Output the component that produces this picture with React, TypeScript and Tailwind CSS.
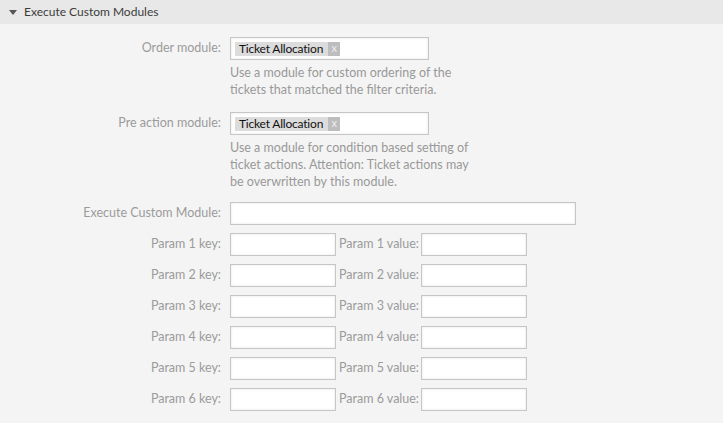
import React from 'react';

const font = { fontFamily: '"Source Sans Pro", Lato, "Noto Sans", sans-serif' };

function Tag({ label }: { label: string }) {
  return (
    <span className="inline-flex h-[14px] items-stretch bg-[#dcdcdc] text-[12px] leading-[14px] text-[#111]">
      <span className="pl-[4px] pr-[5px] tracking-[-0.2px]">{label}</span>
      <span className="flex w-[12px] items-center justify-center bg-[#bdbdbd] pb-[1px] text-[11px] text-[#eee]">x</span>
    </span>
  );
}

function Field({ className = '', children }: { className?: string; children?: React.ReactNode }) {
  return (
    <div
      className={`flex h-[23px] shrink-0 items-center border border-[#c6c6c6] bg-white px-[4px] shadow-[inset_0_0_3px_rgba(0,0,0,0.1)] ${className}`}
    >
      {children}
    </div>
  );
}

function Label({ text }: { text: string }) {
  return (
    <div className="flex h-[23px] w-[221px] shrink-0 items-center justify-end text-[12.5px] text-[#9b9b9b]">
      {text}
    </div>
  );
}

export default function App() {
  const params = [1, 2, 3, 4, 5, 6];

  return (
    <div className="min-h-[423px] w-[723px] bg-[#f4f4f4]" style={font}>
      <div className="flex h-[24px] items-center bg-[#e8e8e8] pl-[9px]">
        <svg width="8" height="5" viewBox="0 0 8 5" className="mr-[7px]">
          <path d="M0 0 L8 0 L4 5 Z" fill="#555" />
        </svg>
        <span className="text-[12px] text-[#3c3c3c]">Execute Custom Modules</span>
      </div>

      <div className="pt-[13px]">
        <div className="flex gap-[9px]">
          <Label text="Order module:" />
          <div>
            <Field className="w-[199px]">
              <Tag label="Ticket Allocation" />
            </Field>
            <p className="mt-[4px] w-[250px] text-[12.5px] leading-[17px] text-[#999]">
              Use a module for custom ordering of the tickets that matched the filter criteria.
            </p>
          </div>
        </div>

        <div className="mt-[14px] flex gap-[9px]">
          <Label text="Pre action module:" />
          <div>
            <Field className="w-[199px]">
              <Tag label="Ticket Allocation" />
            </Field>
            <p className="mt-[4px] w-[240px] text-[12.5px] leading-[17px] text-[#999]">
              Use a module for condition based setting of ticket actions. Attention: Ticket actions may be overwritten by this module.
            </p>
          </div>
        </div>

        <div className="mt-[12px] flex gap-[9px]">
          <Label text="Execute Custom Module:" />
          <Field className="w-[346px]" />
        </div>

        {params.map((n) => (
          <div key={n} className="mt-[8px] flex items-center">
            <Label text={`Param ${n} key:`} />
            <Field className="ml-[9px] w-[106px]" />
            <span className="ml-[3px] w-[82px] whitespace-nowrap text-[12.5px] text-[#9b9b9b]">
              Param {n} value:
            </span>
            <Field className="w-[106px]" />
          </div>
        ))}
      </div>
    </div>
  );
}
